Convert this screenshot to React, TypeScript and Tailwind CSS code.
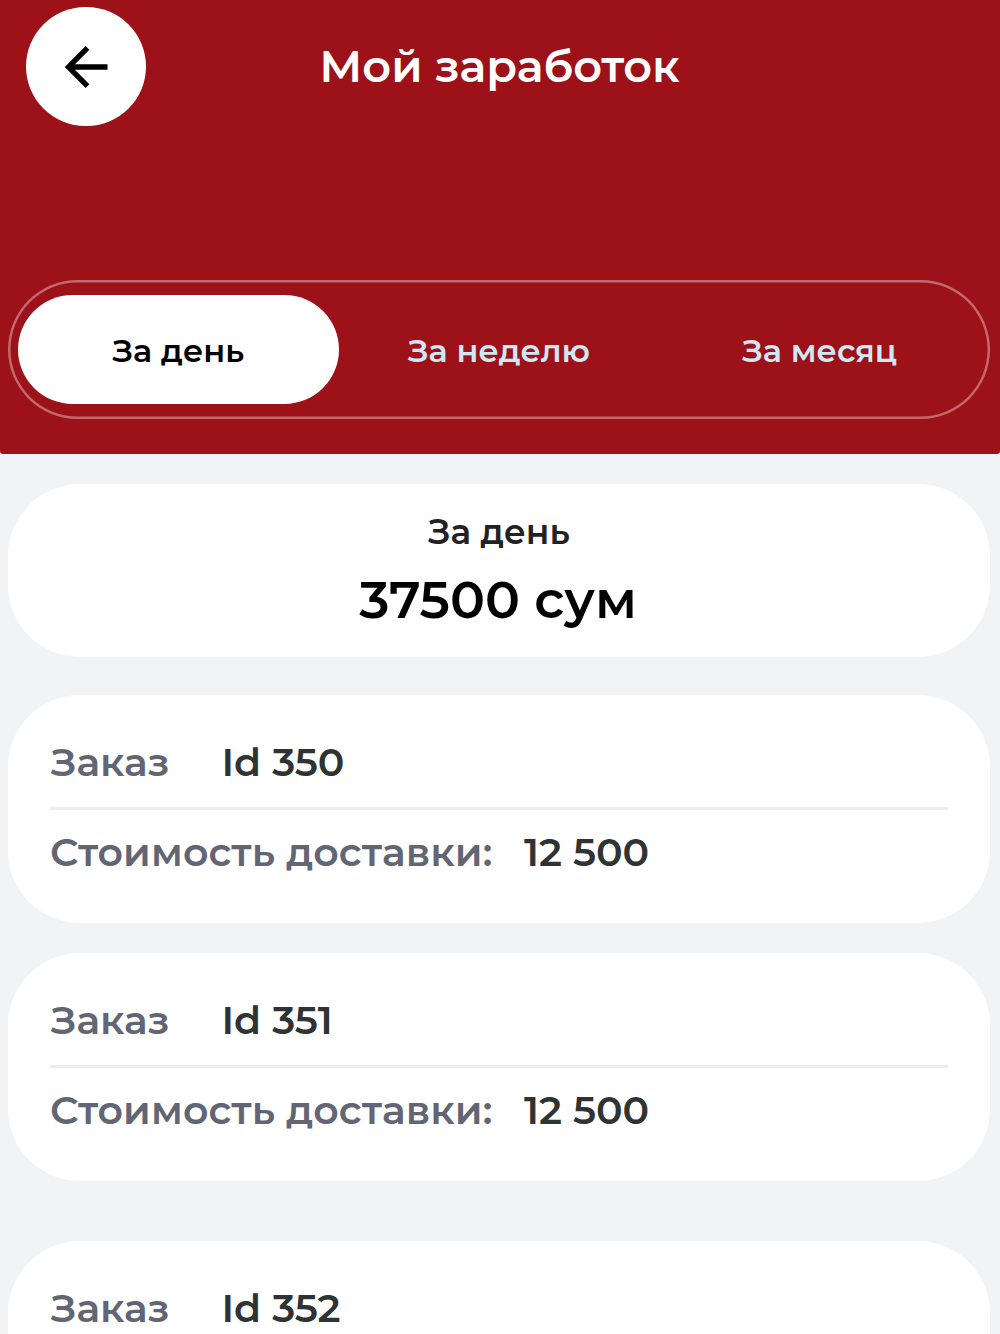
const orders = [
  { id: 350, price: '12 500', gap: 'mt-[30px]' },
  { id: 351, price: '12 500', gap: 'mt-[30px]' },
  { id: 352, price: '12 500', gap: 'mt-[60px]' },
];

export default function App() {
  return (
    <div className="h-[1334px] overflow-hidden bg-[#f0f4f7] font-['Montserrat','Inter',sans-serif] font-semibold">
      {/* Header */}
      <header className="h-[454px] rounded-b-[3px] bg-[#9d1119] pr-[10px] pl-2 pt-[7px]">
        <div className="grid grid-cols-[1fr_auto_1fr] items-center">
          <button className="ml-[18px] flex h-[119px] w-[120px] items-center justify-center rounded-full bg-white">
            <svg className="size-12" viewBox="0 0 48 48" fill="none" stroke="black" strokeWidth={5.3}>
              <path d="M45.5 24H8M25.5 4.8L6.5 24l19 19.2" />
            </svg>
          </button>
          <h1 className="ml-px text-[44.7px] text-white">Мой заработок</h1>
        </div>

        {/* Tabs */}
        <div className="mt-[154px] flex h-[139px] items-center rounded-full px-[10px] text-[32px] text-[#cfe8f4] ring-[2.5px] ring-[#c4686f] ring-inset">
          <button className="h-[109px] w-[321px] rounded-full bg-white pt-[2px] text-black">За день</button>
          <button className="w-[321px] pt-[3px]">За неделю</button>
          <button className="w-[321px] pt-[3px]">За месяц</button>
        </div>
      </header>

      <main className="pr-[10px] pl-2">
        {/* Total */}
        <section className="mt-[30px] mb-[38px] flex h-[173px] flex-col items-center rounded-[72px] bg-white pt-6">
          <p className="text-[34.4px] leading-[48px] text-[#222222]">За день</p>
          <p className="mr-[2px] text-[52px] leading-[88px] text-black">37500 сум</p>
        </section>

        {/* Orders */}
        {orders.map((order) => (
          <section key={order.id} className={`${order.gap} h-[228px] rounded-[72px] bg-white px-[42px] pt-[42px] text-[39.5px] text-[#2e3333]`}>
            <div className="flex h-[73px] border-b-[3px] border-[#ebebf0] pl-px leading-[51px]">
              <span className="w-[170.5px] text-[#626573]">Заказ</span>
              <span>Id {order.id}</span>
            </div>
            <div className="flex pt-[17px] leading-[51px]">
              <span className="w-[474px] tracking-[0.1px] text-[#626573]">Стоимость доставки:</span>
              <span>{order.price}</span>
            </div>
          </section>
        ))}
      </main>
    </div>
  );
}
